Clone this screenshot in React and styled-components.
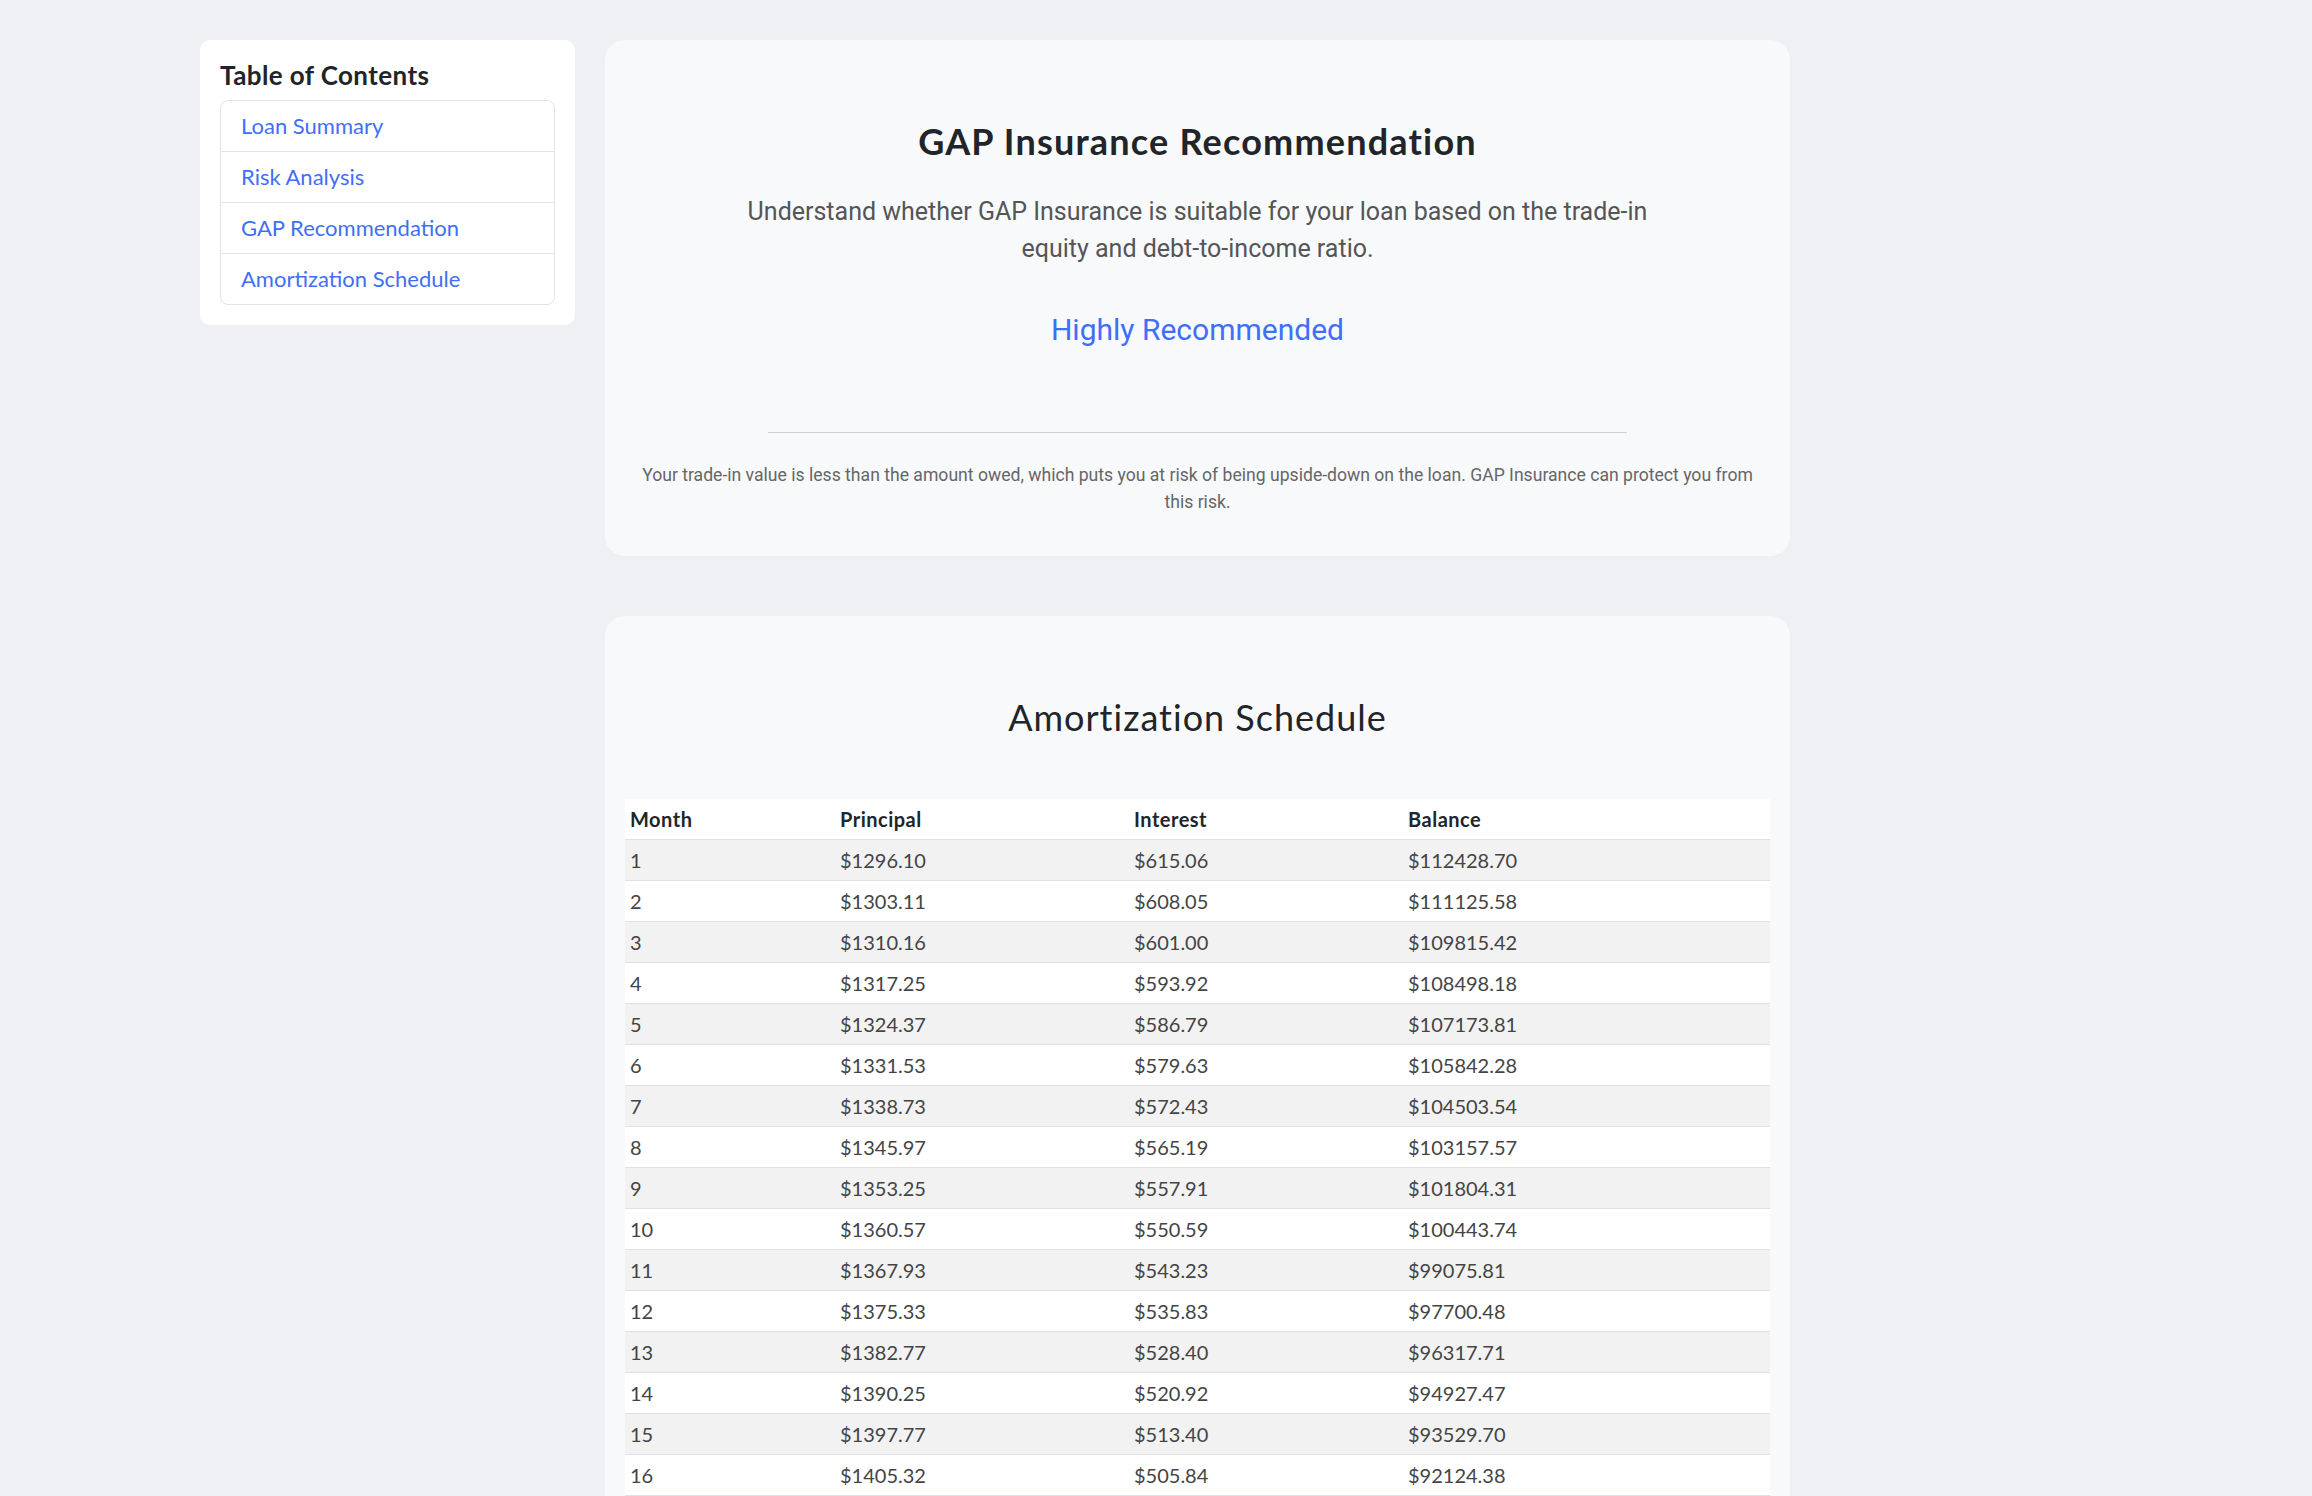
import styled, { createGlobalStyle } from "styled-components"

const GlobalStyle = createGlobalStyle`
  body {
    margin: 0;
    background: #eff0f4;
    font-family: Lato, "Liberation Sans", sans-serif;
  }
`

const Page = styled.div`
  display: flex;
  align-items: flex-start;
  gap: 30px;
  padding: 40px 0 0 200px;
`

const TocCard = styled.nav`
  width: 375px;
  box-sizing: border-box;
  background: #ffffff;
  border-radius: 10px;
  padding: 20px;
`

const TocTitle = styled.h3`
  margin: 0 0 10px;
  font-size: 26px;
  line-height: 30px;
  letter-spacing: 0.4px;
  font-weight: 700;
  color: #212529;
`

const TocList = styled.ul`
  list-style: none;
  margin: 0;
  padding: 0;
  border: 1px solid #e1e3e8;
  border-radius: 8px;
`

const TocItem = styled.li`
  padding: 14px 20px;
  font-size: 22px;
  line-height: 22px;
  border-bottom: 1px solid #e1e3e8;
  &:last-child {
    border-bottom: none;
  }
`

const TocLink = styled.a`
  color: #3f6ff5;
  text-decoration: none;
`

const Main = styled.main`
  width: 1185px;
  display: flex;
  flex-direction: column;
  gap: 60px;
`

const Card = styled.section`
  background: #f8f9fb;
  border-radius: 20px;
  padding: 20px;
  text-align: center;
`

const CardTitle = styled.h2`
  margin: 60px 0 0;
  font-size: 36px;
  line-height: 43px;
  font-weight: ${(p) => (p.$bold ? 700 : 400)};
  letter-spacing: ${(p) => (p.$bold ? "1.2px" : "1px")};
  color: #212529;
`

const Lead = styled.p`
  max-width: 950px;
  margin: 30px auto 0;
  font-family: Roboto, sans-serif;
  font-size: 25px;
  line-height: 37px;
  color: #555555;
`

const Verdict = styled.div`
  margin-top: 40px;
  font-family: Roboto, sans-serif;
  font-size: 30px;
  line-height: 45px;
  color: #3f6ff5;
`

const Divider = styled.hr`
  width: 75%;
  margin: 80px auto 0;
  border: none;
  border-top: 1px solid #cfd1d6;
`

const Note = styled.p`
  margin: 29px 0 20px;
  padding: 0 10px;
  font-family: Roboto, sans-serif;
  font-size: 17.6px;
  line-height: 27px;
  color: #666666;
`

const Table = styled.table`
  width: 100%;
  margin-top: 60px;
  border-collapse: collapse;
  table-layout: fixed;
  background: #ffffff;
  text-align: left;
  font-size: 20px;
`

const HeadCell = styled.th`
  width: ${(p) => p.$width || "auto"};
  padding: 9px 5px;
  line-height: 22px;
  font-weight: 700;
  letter-spacing: 0.5px;
  color: #212529;
  border-bottom: 1px solid #dfe1e6;
`

const Row = styled.tr`
  &:nth-child(odd) {
    background: #f2f2f2;
  }
`

const Cell = styled.td`
  padding: 9px 5px;
  line-height: 22px;
  color: #444444;
  border-bottom: 1px solid #dfe1e6;
`

const sections = ["Loan Summary", "Risk Analysis", "GAP Recommendation", "Amortization Schedule"]

const firstRows = [
  [1296.1, 615.06, 112428.7],
  [1303.11, 608.05, 111125.58],
  [1310.16, 601.0, 109815.42],
  [1317.25, 593.92, 108498.18],
  [1324.37, 586.79, 107173.81],
  [1331.53, 579.63, 105842.28],
  [1338.73, 572.43, 104503.54],
  [1345.97, 565.19, 103157.57],
  [1353.25, 557.91, 101804.31],
  [1360.57, 550.59, 100443.74],
  [1367.93, 543.23, 99075.81],
  [1375.33, 535.83, 97700.48],
  [1382.77, 528.4, 96317.71],
  [1390.25, 520.92, 94927.47],
  [1397.77, 513.4, 93529.7],
  [1405.32, 505.84, 92124.38],
]

// rest of the 72-month loan at 6.49%
function buildSchedule() {
  const rate = 0.0649 / 12
  const payment = 1911.16
  const rows = firstRows.map(([principal, interest, balance], i) => ({ m: i + 1, principal, interest, balance }))
  let balance = firstRows[firstRows.length - 1][2]
  for (let m = firstRows.length + 1; m <= 72; m++) {
    const interest = balance * rate
    const principal = Math.min(payment - interest, balance)
    balance = Math.max(balance - principal, 0)
    rows.push({ m, principal, interest, balance })
  }
  return rows
}

const schedule = buildSchedule()
const money = (v) => "$" + v.toFixed(2)

export default function App() {
  return (
    <>
      <GlobalStyle />
      <Page>
        <TocCard>
          <TocTitle>Table of Contents</TocTitle>
          <TocList>
            {sections.map((s) => (
              <TocItem key={s}>
                <TocLink href="#">{s}</TocLink>
              </TocItem>
            ))}
          </TocList>
        </TocCard>

        <Main>
          <Card>
            <CardTitle $bold>GAP Insurance Recommendation</CardTitle>
            <Lead>
              Understand whether GAP Insurance is suitable for your loan based on the trade-in equity and
              debt-to-income ratio.
            </Lead>
            <Verdict>Highly Recommended</Verdict>
            <Divider />
            <Note>
              Your trade-in value is less than the amount owed, which puts you at risk of being upside-down on the
              loan. GAP Insurance can protect you from this risk.
            </Note>
          </Card>

          <Card>
            <CardTitle>Amortization Schedule</CardTitle>
            <Table>
              <thead>
                <tr>
                  <HeadCell $width="200px">Month</HeadCell>
                  <HeadCell $width="284px">Principal</HeadCell>
                  <HeadCell $width="264px">Interest</HeadCell>
                  <HeadCell>Balance</HeadCell>
                </tr>
              </thead>
              <tbody>
                {schedule.map((r) => (
                  <Row key={r.m}>
                    <Cell>{r.m}</Cell>
                    <Cell>{money(r.principal)}</Cell>
                    <Cell>{money(r.interest)}</Cell>
                    <Cell>{money(r.balance)}</Cell>
                  </Row>
                ))}
              </tbody>
            </Table>
          </Card>
        </Main>
      </Page>
    </>
  )
}
